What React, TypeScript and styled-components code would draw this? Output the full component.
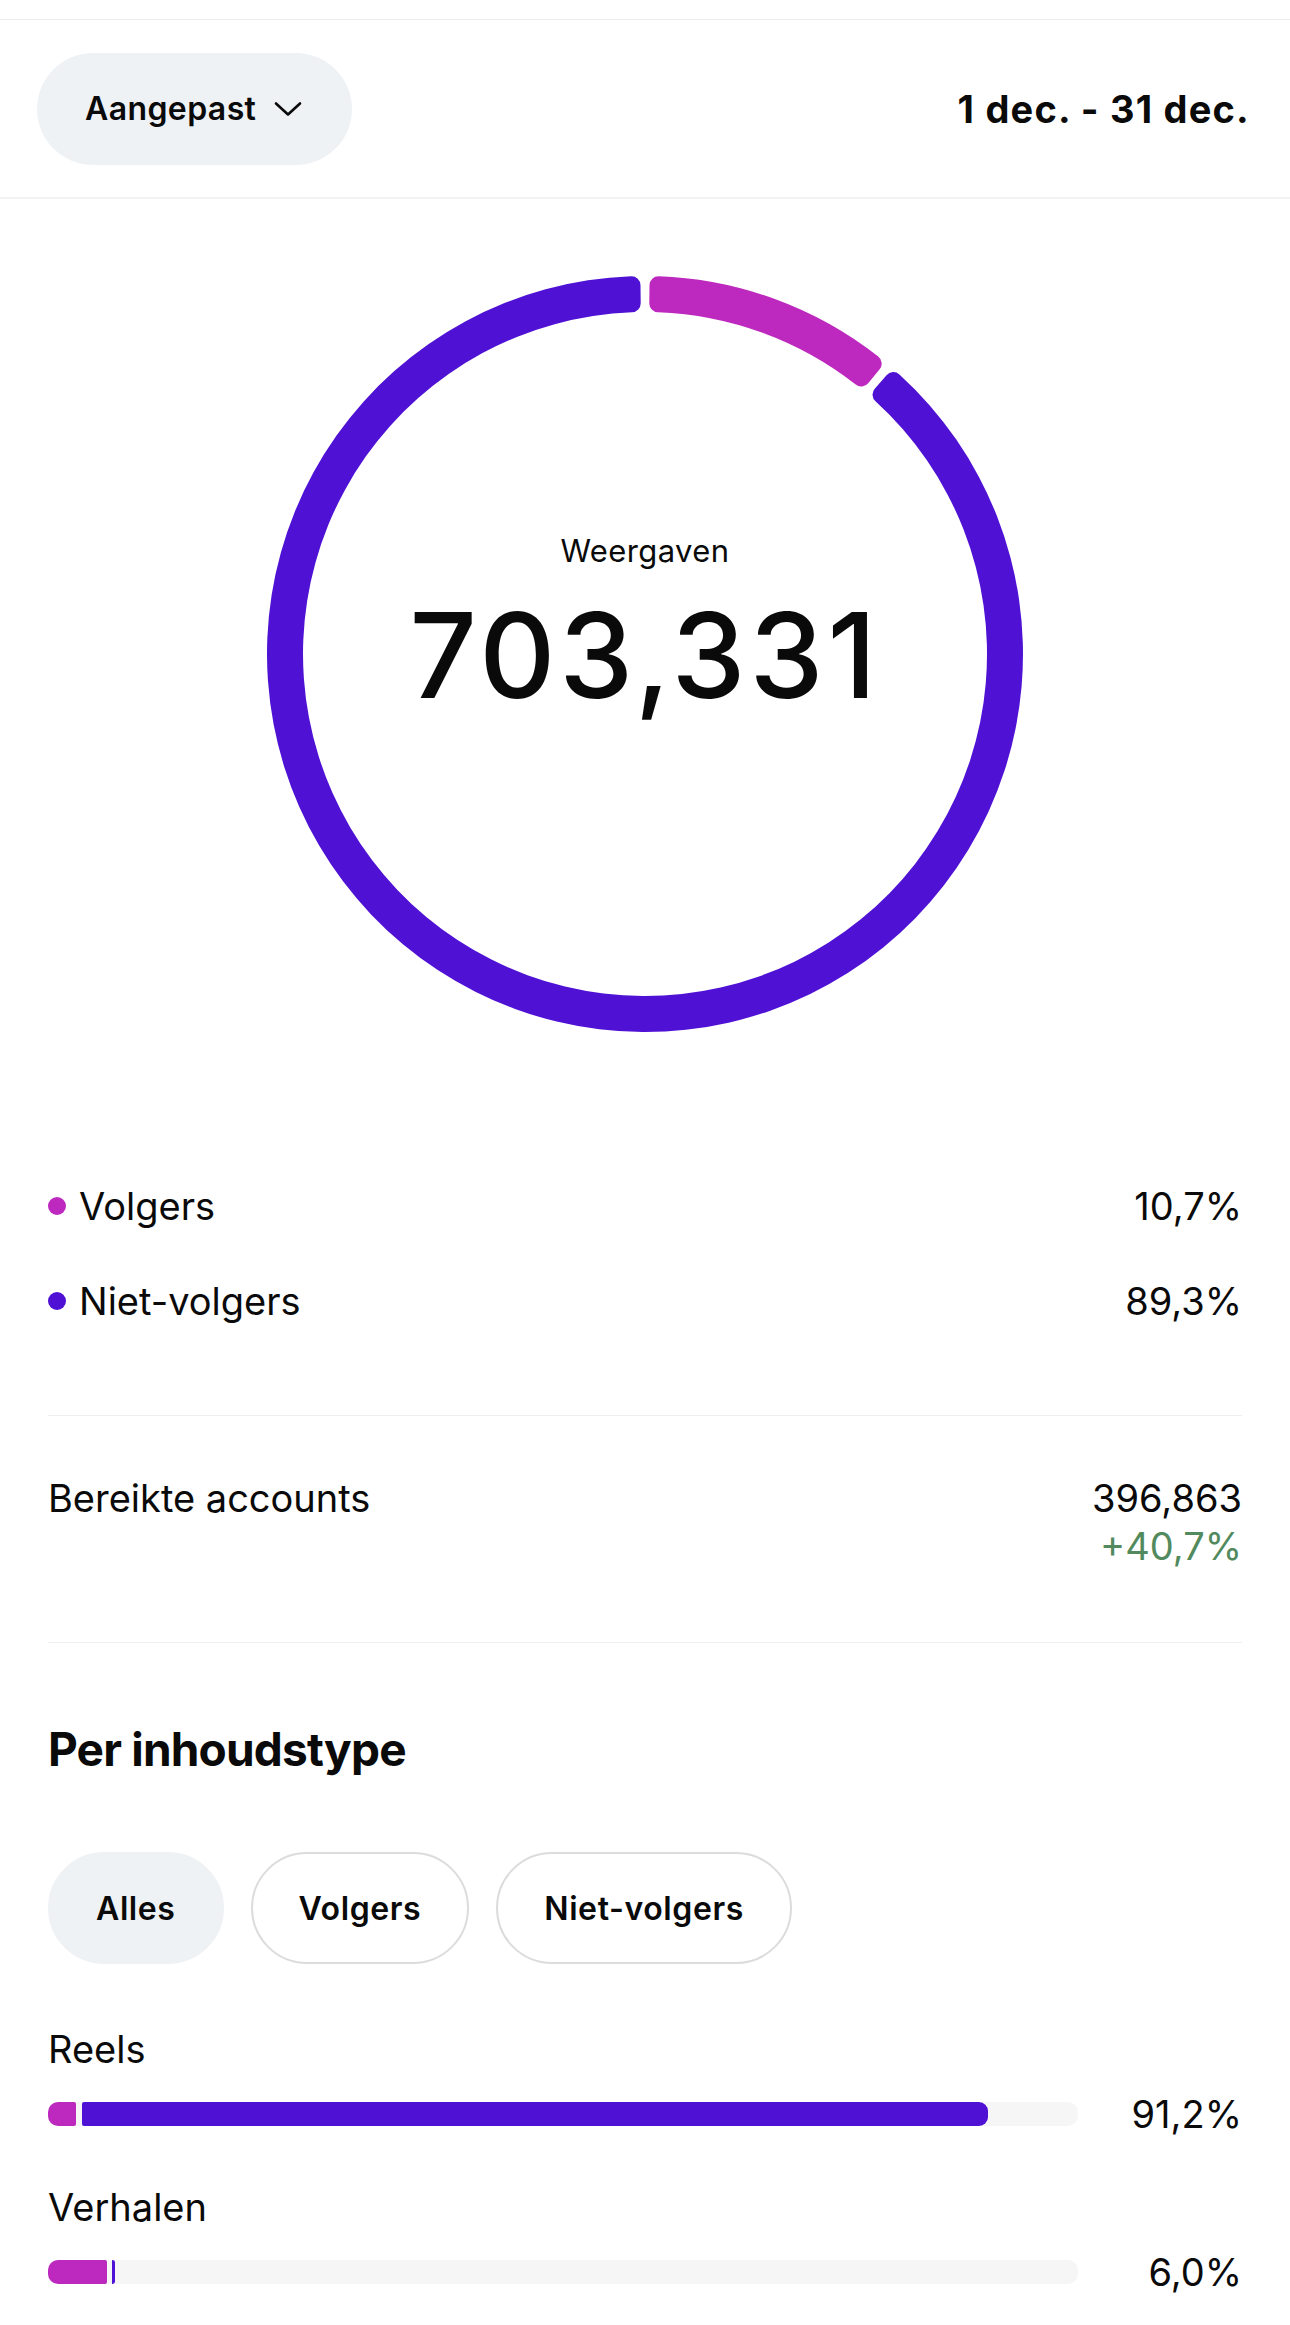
import React from "react";
import styled, { createGlobalStyle } from "styled-components";

const GlobalStyle = createGlobalStyle`
  html, body { margin: 0; padding: 0; background: #ffffff; }
  * { box-sizing: border-box; }
`;

const BLUE = "#4f12d5";
const PINK = "#bd29be";

const Page = styled.div`
  width: 1290px;
  min-height: 2325px;
  background: #ffffff;
  font-family: Inter, "Noto Sans", sans-serif;
  color: #0a0a0a;
  overflow: hidden;
`;

const Header = styled.header`
  margin-top: 19px;
  height: 180px;
  border-top: 1px solid #ececec;
  border-bottom: 2px solid #f2f3f5;
  display: flex;
  align-items: center;
  justify-content: space-between;
  padding: 0 40px 0 37px;
`;

const RangePill = styled.button`
  height: 112px;
  border: none;
  border-radius: 56px;
  background: #eff2f5;
  display: flex;
  align-items: center;
  gap: 18px;
  padding: 0 50px 0 48px;
  font-family: inherit;
  font-size: 32px;
  font-weight: 600;
  letter-spacing: 0.4px;
  color: #0a0a0a;
`;

const DateText = styled.div`
  font-size: 38px;
  font-weight: 700;
  letter-spacing: 1.2px;
`;

const ChartWrap = styled.section`
  margin-top: 77px;
  display: grid;
  justify-content: center;
  & > * {
    grid-area: 1 / 1;
  }
`;

const CenterLabel = styled.div`
  justify-self: center;
  align-self: start;
  margin-top: 255px;
  display: flex;
  flex-direction: column;
  align-items: center;
  gap: 24px;
`;

const ChartTitle = styled.div`
  font-size: 31px;
  line-height: 40px;
  font-weight: 400;
  letter-spacing: 0.4px;
`;

const ChartValue = styled.div`
  font-size: 118px;
  line-height: 120px;
  font-weight: 500;
  letter-spacing: 4px;
`;

const Content = styled.main`
  padding: 0 48px 0 48px;
`;

const Legend = styled.div`
  margin-top: 150px;
  display: flex;
  flex-direction: column;
  gap: 47px;
`;

const Row = styled.div`
  display: flex;
  align-items: center;
  justify-content: space-between;
  font-size: 38px;
  line-height: 48px;
`;

const LegendLabel = styled.div`
  display: flex;
  align-items: center;
  gap: 13px;
`;

const Dot = styled.span<{ $color: string }>`
  width: 18px;
  height: 18px;
  border-radius: 50%;
  background: ${(p) => p.$color};
`;

const Divider = styled.hr<{ $top: number }>`
  margin: ${(p) => p.$top}px 0 0;
  border: none;
  height: 1px;
  background: #efefef;
  width: 100%;
`;

const ReachRow = styled.div`
  margin-top: 58px;
  display: flex;
  justify-content: space-between;
  font-size: 38px;
  line-height: 48px;
`;

const ReachValues = styled.div`
  display: flex;
  flex-direction: column;
  align-items: flex-end;
`;

const Delta = styled.div`
  color: #528a5e;
`;

const Heading = styled.h2`
  margin: 78px 0 0;
  font-size: 46px;
  line-height: 56px;
  font-weight: 700;
  letter-spacing: -0.8px;
`;

const Chips = styled.div`
  margin-top: 75px;
  display: flex;
  gap: 27px;
`;

const Chip = styled.button<{ $active?: boolean }>`
  height: 112px;
  border-radius: 56px;
  padding: 0 46px;
  border: 2px solid ${(p) => (p.$active ? "#eff2f5" : "#dcdcdc")};
  background: ${(p) => (p.$active ? "#eff2f5" : "#ffffff")};
  font-family: inherit;
  font-size: 32px;
  font-weight: 600;
  letter-spacing: 0.6px;
  color: #0a0a0a;
`;

const TypeLabel = styled.div<{ $top: number }>`
  margin-top: ${(p) => p.$top}px;
  font-size: 38px;
  line-height: 48px;
`;

const BarRow = styled.div`
  margin-top: 17px;
  display: flex;
  align-items: center;
  height: 48px;
`;

const Track = styled.div`
  flex: 1;
  height: 24px;
  border-radius: 10px;
  background: #f6f6f6;
  display: flex;
  overflow: hidden;
`;

const FillFollow = styled.div`
  height: 100%;
  background: ${PINK};
  border-radius: 7px 2px 2px 7px;
`;

const FillNon = styled.div<{ $gap: number }>`
  height: 100%;
  margin-left: ${(p) => p.$gap}px;
  background: ${BLUE};
  border-radius: 2px 9px 9px 2px;
`;

const BarValue = styled.div`
  width: 164px;
  text-align: right;
  font-size: 38px;
  line-height: 48px;
`;

const Chevron = () => (
  <svg width="28" height="16" viewBox="0 0 28 16" fill="none">
    <path d="M2 2.5 L14 13.5 L26 2.5" stroke="#0a0a0a" strokeWidth="2.6" strokeLinecap="round" strokeLinejoin="round" />
  </svg>
);

function pt(c: number, rho: number, deg: number): string {
  const a = (deg * Math.PI) / 180;
  return `${(c + rho * Math.sin(a)).toFixed(2)} ${(c - rho * Math.cos(a)).toFixed(2)}`;
}

function segment(c: number, R: number, r: number, a0: number, a1: number, rc: number): string {
  const dO = R - rc;
  const phiO = (Math.asin(rc / dO) * 180) / Math.PI;
  const dI = r + rc;
  const phiI = (Math.asin(rc / dI) * 180) / Math.PI;
  const lo = a1 - a0 - 2 * phiO > 180 ? 1 : 0;
  const li = a1 - a0 - 2 * phiI > 180 ? 1 : 0;
  const radO = dO * Math.cos((phiO * Math.PI) / 180);
  const radI = dI * Math.cos((phiI * Math.PI) / 180);
  return [
    `M ${pt(c, radI, a0)}`,
    `L ${pt(c, radO, a0)}`,
    `A ${rc} ${rc} 0 0 1 ${pt(c, R, a0 + phiO)}`,
    `A ${R} ${R} 0 ${lo} 1 ${pt(c, R, a1 - phiO)}`,
    `A ${rc} ${rc} 0 0 1 ${pt(c, radO, a1)}`,
    `L ${pt(c, radI, a1)}`,
    `A ${rc} ${rc} 0 0 1 ${pt(c, r, a1 - phiI)}`,
    `A ${r} ${r} 0 ${li} 0 ${pt(c, r, a0 + phiI)}`,
    `A ${rc} ${rc} 0 0 1 ${pt(c, radI, a0)}`,
    "Z",
  ].join(" ");
}

const Donut = ({ split }: { split: number }) => {
  const size = 756;
  const c = size / 2;
  const R = 378;
  const r = 342;
  const gap = 0.7;
  return (
    <svg width={size} height={size} viewBox={`0 0 ${size} ${size}`}>
      <path d={segment(c, R, r, gap, split - gap, 9)} fill={PINK} />
      <path d={segment(c, R, r, split + gap, 360 - gap, 9)} fill={BLUE} />
    </svg>
  );
};

const types = [
  { name: "Reels", follow: 2.72, non: 88.0, gap: 6, value: "91,2%", top: 61 },
  { name: "Verhalen", follow: 5.73, non: 0.3, gap: 5, value: "6,0%", top: 45 },
];

export default function App() {
  return (
    <Page>
      <GlobalStyle />
      <Header>
        <RangePill>
          Aangepast
          <Chevron />
        </RangePill>
        <DateText>1 dec. - 31 dec.</DateText>
      </Header>

      <ChartWrap>
        <Donut split={40.2} />
        <CenterLabel>
          <ChartTitle>Weergaven</ChartTitle>
          <ChartValue>703,331</ChartValue>
        </CenterLabel>
      </ChartWrap>

      <Content>
        <Legend>
          <Row>
            <LegendLabel>
              <Dot $color={PINK} />
              Volgers
            </LegendLabel>
            <span>10,7%</span>
          </Row>
          <Row>
            <LegendLabel>
              <Dot $color={BLUE} />
              Niet-volgers
            </LegendLabel>
            <span>89,3%</span>
          </Row>
        </Legend>

        <Divider $top={90} />

        <ReachRow>
          <span>Bereikte accounts</span>
          <ReachValues>
            <span>396,863</span>
            <Delta>+40,7%</Delta>
          </ReachValues>
        </ReachRow>

        <Divider $top={72} />

        <Heading>Per inhoudstype</Heading>

        <Chips>
          <Chip $active>Alles</Chip>
          <Chip>Volgers</Chip>
          <Chip>Niet-volgers</Chip>
        </Chips>

        {types.map((t) => (
          <React.Fragment key={t.name}>
            <TypeLabel $top={t.top}>{t.name}</TypeLabel>
            <BarRow>
              <Track>
                <FillFollow style={{ width: `${t.follow}%` }} />
                <FillNon $gap={t.gap} style={{ width: `${t.non}%` }} />
              </Track>
              <BarValue>{t.value}</BarValue>
            </BarRow>
          </React.Fragment>
        ))}
      </Content>
    </Page>
  );
}
